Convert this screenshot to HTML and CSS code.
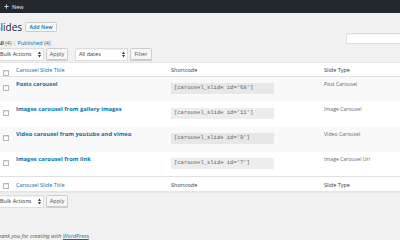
FILE: index.html
```html
<!DOCTYPE html>
<html>
<head>
<meta charset="utf-8">
<link rel="stylesheet" href="styles.css">
</head>
<body>
<div class="adminbar">
  <svg class="plus" width="5" height="5" viewBox="0 0 5 5"><path d="M2.5 0.3V4.7M0.3 2.5H4.7" stroke="#c8cacc" stroke-width="1"/></svg>
  <span>New</span>
</div>
<div class="wrap">
  <div class="title-row">
    <h1>Slides</h1>
    <a class="add-new">Add New</a>
  </div>
  <div class="sub-row">
    <div class="subsubsub"><b>All</b> <span class="count">(4)</span> <span class="sep">|</span> <a>Published</a> <span class="count">(4)</span></div>
    <div class="search"></div>
  </div>
  <div class="tablenav">
    <div class="select bulk">Bulk Actions<svg class="arrows" width="3" height="7" viewBox="0 0 3 7"><path d="M0 3L1.5 0.5L3 3ZM0 4L1.5 6.5L3 4Z" fill="#32373c"/></svg></div>
    <div class="button">Apply</div>
    <div class="select dates">All dates<svg class="arrows" width="3" height="7" viewBox="0 0 3 7"><path d="M0 3L1.5 0.5L3 3ZM0 4L1.5 6.5L3 4Z" fill="#32373c"/></svg></div>
    <div class="button">Filter</div>
  </div>
  <table class="list">
    <colgroup><col class="c-cb"><col class="c-title"><col class="c-code"><col class="c-type"></colgroup>
    <thead>
      <tr><th class="cb"><span class="check"></span></th><th><a>Carousel Slide Title</a></th><th>Shortcode</th><th>Slide Type</th></tr>
    </thead>
    <tbody>
      <tr class="odd"><td class="cb"><span class="check"></span></td><td><a class="row-title">Posts carousel</a></td><td><span class="code">[carousel_slide id='68']</span></td><td class="type">Post Carousel</td></tr>
      <tr><td class="cb"><span class="check"></span></td><td><a class="row-title">Images carousel from gallery images</a></td><td><span class="code">[carousel_slide id='11']</span></td><td class="type">Image Carousel</td></tr>
      <tr class="odd"><td class="cb"><span class="check"></span></td><td><a class="row-title">Video carousel from youtube and vimeo</a></td><td><span class="code">[carousel_slide id='9']</span></td><td class="type">Video Carousel</td></tr>
      <tr class="last"><td class="cb"><span class="check"></span></td><td><a class="row-title">Images carousel from link</a></td><td><span class="code">[carousel_slide id='7']</span></td><td class="type">Image Carousel Url</td></tr>
    </tbody>
    <tfoot>
      <tr><th class="cb"><span class="check"></span></th><th><a>Carousel Slide Title</a></th><th>Shortcode</th><th>Slide Type</th></tr>
    </tfoot>
  </table>
  <div class="tablenav bottom">
    <div class="select bulk">Bulk Actions<svg class="arrows" width="3" height="7" viewBox="0 0 3 7"><path d="M0 3L1.5 0.5L3 3ZM0 4L1.5 6.5L3 4Z" fill="#32373c"/></svg></div>
    <div class="button">Apply</div>
  </div>
  <p class="footer">Thank you for creating with <a>WordPress</a>.</p>
</div>
</body>
</html>
```

FILE: styles.css
```css
html, body {
  margin: 0;
  padding: 0;
  background: #f1f1f1;
  overflow: hidden;
}
body {
  width: 400px;
  height: 240px;
  font-family: "Open Sans", "Noto Sans", sans-serif;
  font-size: 5.5px;
  color: #444;
}
a { color: #0073aa; text-decoration: none; }

.adminbar {
  height: 13px;
  background: #23282d;
  display: flex;
  align-items: center;
  padding-left: 4px;
  gap: 3px;
  color: #eee;
  font-size: 5.5px;
}
.adminbar .plus { display: block; }

.wrap {
  margin-left: -3px;
}
.title-row {
  margin-top: 8px;
  height: 12px;
  display: flex;
  align-items: center;
  gap: 3px;
}
.title-row h1 {
  margin: 0 0 0 -2px;
  font-size: 10px;
  line-height: 12px;
  font-weight: 400;
  color: #23282d;
}
.add-new {
  height: 8px;
  line-height: 8px;
  padding: 0 3.5px;
  border: 1px solid #ccc;
  border-radius: 1.5px;
  background: #f7f7f7;
  font-weight: 600;
  font-size: 5.3px;
}

.sub-row {
  height: 14px;
  display: flex;
  justify-content: space-between;
}
.subsubsub {
  align-self: flex-end;
  line-height: 7px;
  margin-bottom: 0.5px;
  color: #666;
}
.subsubsub b { color: #000; font-weight: 600; }
.subsubsub .count { color: #555; }
.subsubsub .sep { color: #a0a5aa; }
.search {
  margin-right: -6px;
  width: 58px;
  height: 9px;
  border: 1px solid #ddd;
  background: #fff;
  box-shadow: inset 0 1px 1px rgba(0,0,0,.05);
}

.tablenav {
  margin: 1px 0 1px;
  height: 13px;
  display: flex;
  align-items: stretch;
}
.tablenav.bottom { margin-top: 3px; }
.select {
  position: relative;
  box-sizing: border-box;
  border: 1px solid #ddd;
  background: #fff;
  box-shadow: inset 0 1px 1px rgba(0,0,0,.06);
  color: #32373c;
  padding-left: 2px;
  line-height: 11px;
}
.select .arrows {
  position: absolute;
  right: 2px;
  top: 2px;
}
.select.bulk { width: 47px; }
.select.dates { width: 53px; margin-left: 7px; padding-left: 3px; }
.button {
  box-sizing: border-box;
  margin-left: 2px;
  width: 22px;
  border: 1px solid #ccc;
  border-radius: 1.5px;
  background: #f7f7f7;
  box-shadow: 0 1px 0 #ccc;
  color: #555;
  text-align: center;
  line-height: 11px;
  height: 12px;
  align-self: flex-start;
}

.list {
  width: 407px;
  border-collapse: separate;
  border-spacing: 0;
  table-layout: fixed;
  background: #fff;
  border: 1px solid #e5e5e5;
  box-shadow: 0 1px 1px rgba(0,0,0,.04);
}
.c-cb { width: 14px; }
.c-title { width: 155px; }
.c-code { width: 153px; }
.list th, .list td {
  text-align: left;
  vertical-align: top;
  padding: 0 4px;
  font-weight: 400;
  line-height: 7px;
  white-space: nowrap;
}
.list thead th {
  height: 14px;
  box-sizing: border-box;
  padding-top: 4px;
  border-bottom: 1px solid #e1e1e1;
  color: #32373c;
}
.list tfoot th {
  height: 15px;
  box-sizing: border-box;
  padding-top: 4.5px;
  border-top: 1px solid #e1e1e1;
  color: #32373c;
}
.list tbody td {
  height: 25px;
  box-sizing: border-box;
  padding-top: 4px;
}
.list tbody tr.last td { height: 24px; }
.list tbody tr.odd { background: #f9f9f9; }
.list .cb { padding-left: 5px; padding-right: 0; }
.list tbody td.cb { padding-top: 8px; }
.list thead th.cb { padding-top: 6.5px; }
.list tfoot th.cb { padding-top: 6px; }
.check {
  display: block;
  width: 6px;
  height: 6px;
  box-sizing: border-box;
  border: 1px solid #b4b9be;
  background: #fff;
  box-shadow: inset 0 1px 1px rgba(0,0,0,.1);
}
.row-title {
  font-weight: 700;
  font-size: 5.8px;
}
.list tbody td:nth-child(3) { padding-top: 6px; }
.code {
  display: block;
  width: 103px;
  height: 10.5px;
  line-height: 10.5px;
  box-sizing: border-box;
  padding: 0 3px;
  background: rgba(0,0,0,.07);
  font-family: "Liberation Mono", "DejaVu Sans Mono", monospace;
  font-size: 5.5px;
  color: #666;
}
.type { color: #666; font-size: 5.2px; }

.footer {
  margin: 25px 0 0 -2px;
  line-height: 7px;
  font-style: italic;
  color: #555;
}
.footer a { text-decoration: underline; }
```
